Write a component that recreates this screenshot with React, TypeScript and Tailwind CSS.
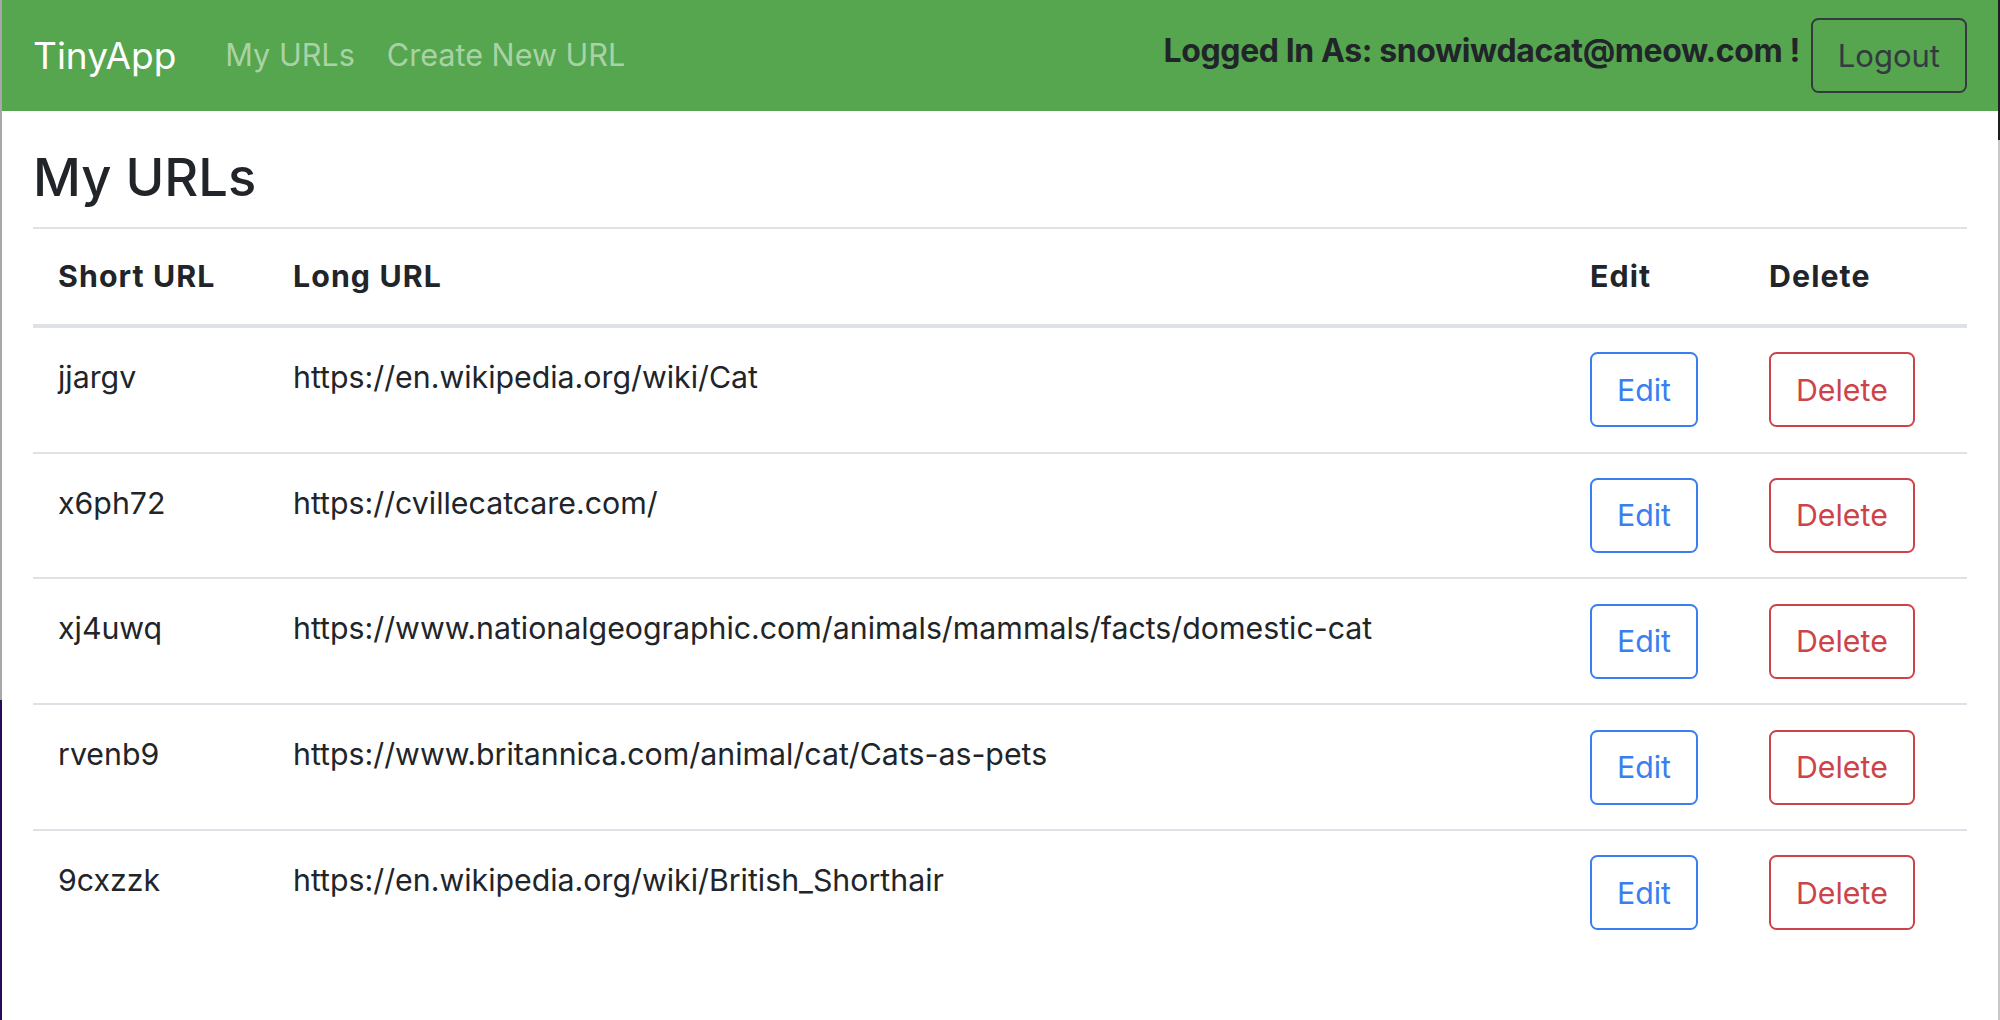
import React from "react";

const rows = [
  ["jjargv", "https://en.wikipedia.org/wiki/Cat"],
  ["x6ph72", "https://cvillecatcare.com/"],
  ["xj4uwq", "https://www.nationalgeographic.com/animals/mammals/facts/domestic-cat"],
  ["rvenb9", "https://www.britannica.com/animal/cat/Cats-as-pets"],
  ["9cxzzk", "https://en.wikipedia.org/wiki/British_Shorthair"],
];

export default function App() {
  return (
    <div
      className="flex w-[2000px] h-[1020px] bg-white text-[#212529] overflow-hidden"
      style={{ fontFamily: "Inter, 'Noto Sans', sans-serif" }}
    >
      <div className="w-[2px] flex flex-col">
        <div className="h-[700px] bg-[#a8a8a8]" />
        <div className="flex-1 bg-[#2a0b55]" />
      </div>
      <div className="flex-1 flex flex-col">
        <nav className="h-[111px] bg-[#55a64f] flex items-center px-[31px]">
          <span className="text-[37px] leading-none text-white">TinyApp</span>
          <div className="ml-[49px] flex gap-[32px] text-[30.6px] leading-none text-[#aad2a7]">
            <span>My URLs</span>
            <span>Create New URL</span>
          </div>
          <div className="ml-auto flex items-center">
            <span className="font-bold text-[32px] leading-none mb-[9px] tracking-[-0.4px]">
              Logged In As: snowiwdacat@meow.com !
            </span>
            <button className="ml-[11px] h-[75px] px-[25px] border-2 border-[#343a40] rounded-[7.5px] text-[31px] text-[#343a40] leading-none">
              Logout
            </button>
          </div>
        </nav>
        <main className="px-[31px]">
          <h1 className="mt-[34px] mb-[17px] text-[52.5px] leading-[1.235] font-medium">My URLs</h1>
          <table className="w-full border-collapse table-fixed text-[30.3px] leading-[45px]">
            <colgroup>
              <col className="w-[235px]" />
              <col />
              <col className="w-[179px]" />
              <col className="w-[223px]" />
            </colgroup>
            <thead>
              <tr className="border-t-2 border-b-4 border-[#dee2e6]">
                <th className="text-left font-bold tracking-[1.1px] px-[25px] py-[25px]">Short URL</th>
                <th className="text-left font-bold tracking-[1.1px] px-[25px] py-[25px]">Long URL</th>
                <th className="text-left font-bold tracking-[1.1px] px-[25px] py-[25px]">Edit</th>
                <th className="text-left font-bold tracking-[1.1px] px-[25px] py-[25px]">Delete</th>
              </tr>
            </thead>
            <tbody>
              {rows.map(([s, l], i) => (
                <tr key={s} className={i === 0 ? "" : "border-t-2 border-[#dee2e6]"}>
                  <td className="align-top px-[25px] pt-[27px] pb-[21.8px] whitespace-nowrap">{s}</td>
                  <td className="align-top px-[25px] pt-[27px] pb-[21.8px] whitespace-nowrap">{l}</td>
                  <td className="align-top px-[25px] py-[24.4px]">
                    <button className="h-[75px] px-[25px] border-2 border-[#3a7ff0] rounded-[7.5px] text-[#3a7ff0] leading-none">
                      Edit
                    </button>
                  </td>
                  <td className="align-top px-[25px] py-[24.4px]">
                    <button className="h-[75px] px-[25px] border-2 border-[#cc434a] rounded-[7.5px] text-[#cc434a] leading-none">
                      Delete
                    </button>
                  </td>
                </tr>
              ))}
            </tbody>
          </table>
        </main>
      </div>
      <div className="w-[2px] flex flex-col">
        <div className="h-[140px] bg-[#1e1e1e]" />
        <div className="flex-1 bg-[#c8c8c8]" />
      </div>
    </div>
  );
}
